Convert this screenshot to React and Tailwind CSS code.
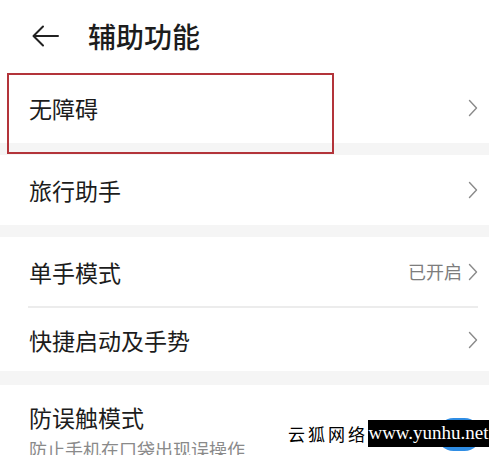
import React from 'react';

const Chevron = () => (
  <svg width="10" height="18" viewBox="0 0 10 18" fill="none" className="shrink-0">
    <polyline points="1.5,1.5 8.5,9 1.5,16.5" stroke="#8a8a8a" strokeWidth="1.4" strokeLinejoin="round" strokeLinecap="round" />
  </svg>
);

const Row = ({ label, value, className = '' }) => (
  <div className={`flex items-center justify-between pl-[29px] pr-[11px] ${className}`}>
    <span className="text-[23px] leading-7 text-[#1c1c1c]">{label}</span>
    <div className="flex items-center gap-[6px]">
      {value && <span className="text-[18px] text-[#7d7d7d]">{value}</span>}
      <Chevron />
    </div>
  </div>
);

const Band = ({ h }) => <div className={`bg-[#f5f5f5] ${h}`} />;

export default function App() {
  return (
    <div
      className="relative w-[489px] h-[455px] overflow-hidden bg-white"
      style={{ fontFamily: '"Noto Sans CJK SC", "Noto Sans", sans-serif' }}
    >
      {/* header */}
      <div className="flex items-center h-[72px] pl-[32px] gap-[29px]">
        <svg width="27" height="22" viewBox="0 0 27 22" fill="none">
          <path d="M26 11H2M11 1.5L1.5 11L11 20.5" stroke="#222" strokeWidth="2" strokeLinecap="round" strokeLinejoin="round" />
        </svg>
        <span className="text-[28px] font-medium text-[#1c1c1c]">辅助功能</span>
      </div>

      <Row label="无障碍" className="h-[71px]" />
      <Band h="h-[12px]" />
      <Row label="旅行助手" className="h-[70px]" />
      <Band h="h-[12px]" />
      <Row label="单手模式" value="已开启" className="h-[69px]" />
      <div className="ml-[28px] mr-[11px] h-[2px] bg-[#ececec]" />
      <Row label="快捷启动及手势" className="h-[63px]" />
      <Band h="h-[14px]" />
      <div className="pl-[29px] pt-[18px]">
        <div className="text-[23px] leading-7 text-[#1c1c1c]">防误触模式</div>
        <div className="text-[18px] leading-6 mt-[6px] text-[#8a8a8a] whitespace-nowrap">防止手机在口袋出现误操作</div>
      </div>

      {/* toggle */}
      <div className="absolute left-[437px] top-[418px] w-[44px] h-[33px] rounded-full bg-[#2f8de4]" />

      {/* red highlight */}
      <div className="absolute left-[7px] top-[73px] w-[327px] h-[81px] border-2 border-[#b3343a]" />

      {/* watermark */}
      <div className="absolute left-[288px] top-[420px] flex items-center h-[27px] whitespace-nowrap">
        <span
          className="text-[17px] leading-none text-black tracking-[3px] w-[80px] shrink-0"
          style={{ fontFamily: '"Noto Sans CJK SC", serif' }}
        >
          云狐网络
        </span>
        <span
          className="bg-black text-white h-[27px] w-[121px] shrink-0 flex items-center justify-center text-[19px]"
          style={{ fontFamily: '"Liberation Serif", serif' }}
        >
          www.yunhu.net
        </span>
      </div>
    </div>
  );
}
